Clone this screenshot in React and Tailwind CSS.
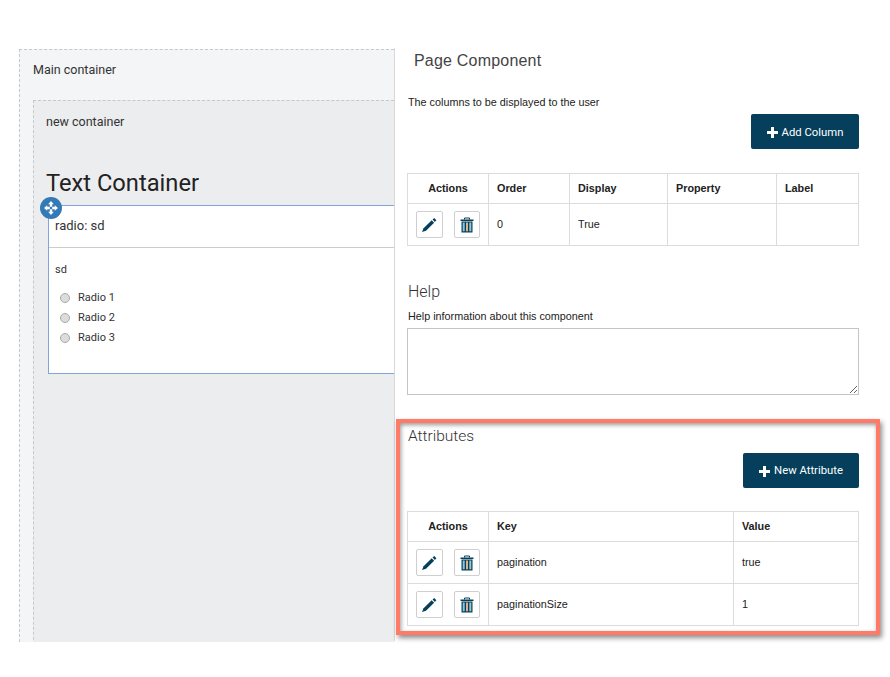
const roboto = "font-['Roboto',sans-serif]";
const arial = "font-['Liberation_Sans',Arial,sans-serif]";

function Plus() {
  return (
    <svg width="11" height="11" viewBox="0 0 11 11" className="shrink-0 mt-[1px]" fill="#fff">
      <rect x="4" y="0" width="3" height="11" />
      <rect x="0" y="4" width="11" height="3" />
    </svg>
  );
}

function Pencil() {
  return (
    <svg width="16" height="16" viewBox="0 0 16 16" fill="#053f5c">
      <path d="M10.7 3.3 13.1 5.7 5 13.7 1 15 2.6 11.3z" />
      <path d="M11.6 2.6 13.2 1 15.4 3.2 13.8 4.9z" />
    </svg>
  );
}

function Trash() {
  return (
    <svg width="14" height="16" viewBox="0 0 14 16">
      <path d="M0.5 2.5H13.5V4H0.5z" fill="#053f5c" />
      <path d="M4.5 2.5V1h5v1.5" fill="none" stroke="#053f5c" strokeWidth="1" />
      <path d="M1.5 4.5h11V15.5h-11z" fill="#053f5c" />
      <rect x="2.7" y="5.5" width="2" height="8.8" fill="#8fc3da" />
      <rect x="6" y="5.5" width="2" height="8.8" fill="#dcb296" />
      <rect x="9.3" y="5.5" width="2" height="8.8" fill="#9cc8bc" />
    </svg>
  );
}

function Move() {
  return (
    <svg width="14" height="14" viewBox="0 0 14 14" fill="#fff">
      <path d="M7 0 9.8 3.2H8.2V5.8H5.8V3.2H4.2z" />
      <path d="M7 14 4.2 10.8H5.8V8.2H8.2V10.8H9.8z" />
      <path d="M0 7 3.2 4.2V5.8H5.8V8.2H3.2V9.8z" />
      <path d="M14 7 10.8 9.8V8.2H8.2V5.8H10.8V4.2z" />
    </svg>
  );
}

function IconButtons() {
  return (
    <div className="flex gap-[11px]">
      <button className="w-[27px] h-[27px] flex items-center justify-center bg-white border border-[#cfcfcf] rounded-[2px]">
        <Pencil />
      </button>
      <button className="w-[27px] h-[27px] flex items-center justify-center bg-white border border-[#cfcfcf] rounded-[2px]">
        <Trash />
      </button>
    </div>
  );
}

function DataTable({ widths, headers, rows, width }) {
  const th = "h-[30px] border border-[#dcdcdc] px-2 text-left text-[10.8px] font-bold text-[#222]";
  const td = "h-[42px] border border-[#dcdcdc] px-2 text-[10.8px] text-[#222]";
  return (
    <table className={`${arial} table-fixed border-collapse`} style={{ width }}>
      <colgroup>
        {widths.map((w, i) => (
          <col key={i} style={{ width: w }} />
        ))}
      </colgroup>
      <thead>
        <tr>
          <th className={`${th} !text-center`}>Actions</th>
          {headers.map((h) => (
            <th key={h} className={th}>{h}</th>
          ))}
        </tr>
      </thead>
      <tbody>
        {rows.map((r, i) => (
          <tr key={i}>
            <td className={td}><IconButtons /></td>
            {r.map((c, j) => (
              <td key={j} className={td}>{c}</td>
            ))}
          </tr>
        ))}
      </tbody>
    </table>
  );
}

function Radio({ label }) {
  return (
    <div className="flex items-center h-[20px]">
      <span className="ml-[5px] w-[10px] h-[10px] rounded-full bg-[#dcdcdc] border border-[#a9a9a9]" />
      <span className="ml-[8px] text-[11px] text-[#333]">{label}</span>
    </div>
  );
}

function ActionButton({ label, width, labelClass }) {
  return (
    <div className="flex justify-end">
      <button
        className={`${roboto} h-[35px] flex items-center justify-center gap-[4px] bg-[#053f5c] text-white text-[11.3px] rounded-[2px]`}
        style={{ width }}
      >
        <Plus />
        <span className={labelClass}>{label}</span>
      </button>
    </div>
  );
}

export default function App() {
  return (
    <div className="relative w-[890px] h-[677px] bg-white overflow-hidden">
      <div className="flex pt-[49px] pl-[19px] h-[642px] box-content">
        <div className={`${roboto} w-[375px] h-[593px] overflow-hidden bg-[#f4f5f7] border-l border-t border-dashed border-[#c8c8c8] pl-[13px] text-[#333]`}>
          <div className="h-[50px] pt-[10px] text-[12.5px] leading-[20px] text-[#333]">Main container</div>
          <div className="h-[600px] bg-[#ecedef] border-l border-t border-dashed border-[#c8c8c8] pl-[12px]">
            <div className="pt-[11px] text-[12.5px] leading-[20px]">new container</div>
            <div className="mt-[35px] text-[23.7px] leading-[32px] text-[#222]">Text Container</div>
            <div className="relative mt-[6px] ml-[2px] h-[169px] bg-white border border-r-0 border-[#84a2dc]">
              <span className="absolute -left-[9px] -top-[9px] w-[22px] h-[22px] rounded-full bg-[#337ab7] flex items-center justify-center">
                <Move />
              </span>
              <div className="h-[42px] pl-[6px] pt-[10px] text-[13px] leading-[20px] border-b border-[#cccccc]">radio: sd</div>
              <div className="pl-[6px] pt-[14px] text-[11px] leading-[16px]">sd</div>
              <div className="pl-[6px] mt-[10px] flex flex-col">
                <Radio label="Radio 1" />
                <Radio label="Radio 2" />
                <Radio label="Radio 3" />
              </div>
            </div>
          </div>
        </div>
        <div className={`${arial} w-[465px] h-[593px] -mt-[1px] border-l border-[#d8d8d8] pl-[12px] text-[#222]`}>
          <div className="pl-[7px] pt-[3px] text-[16px] leading-[20px] tracking-[0.2px] text-[#444]">Page Component</div>
          <div className="mt-[23px] pl-[1px] text-[10.8px] leading-[16px]">The columns to be displayed to the user</div>
          <div className="mt-[4px]"><ActionButton label="Add Column" width={108} labelClass="mt-[3px]" /></div>
          <div className="mt-[24px]">
            <DataTable
              width={451}
              widths={[81, 81, 98, 109, 82]}
              headers={["Order", "Display", "Property", "Label"]}
              rows={[["0", "True", "", ""]]}
            />
          </div>
          <div className={`${roboto} mt-[35px] pl-[1px] text-[16px] leading-[22px] font-light text-[#333]`}>Help</div>
          <div className="mt-[5px] pl-[1px] text-[10.8px] leading-[16px]">Help information about this component</div>
          <textarea className="block mt-[4px] w-[452px] h-[67px] bg-white border border-[#c4c4c4]" />
          <div className={`${roboto} mt-[30px] pl-[1px] text-[15.5px] leading-[22px] font-light text-[#333]`}>Attributes</div>
          <div className="mt-[6px]"><ActionButton label="New Attribute" width={116} labelClass="mt-[1px]" /></div>
          <div className="mt-[23px]">
            <DataTable
              width={451}
              widths={[81, 245, 125]}
              headers={["Key", "Value"]}
              rows={[["pagination", "true"], ["paginationSize", "1"]]}
            />
          </div>
        </div>
      </div>
      <div className="absolute left-[396px] top-[419px] w-[484px] h-[216px] border-[4px] border-[#ff7b67] shadow-[2px_3px_5px_rgba(0,0,0,0.45),inset_1px_2px_4px_rgba(0,0,0,0.4)] pointer-events-none" />
    </div>
  );
}
